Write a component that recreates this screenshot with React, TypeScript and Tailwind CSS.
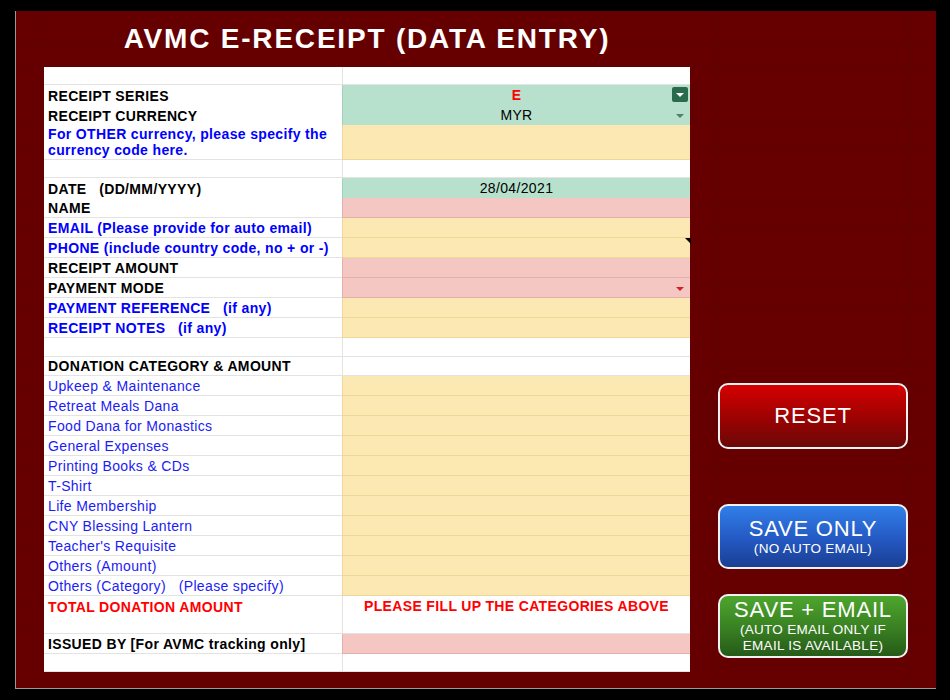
import React from 'react';

type Tone = 'black' | 'blue' | 'cat' | 'red';
type Fill = 'white' | 'green' | 'yellow' | 'pink';
type Marker = 'series' | 'grey' | 'red' | 'note';

type Row = {
  label?: React.ReactNode;
  tone?: Tone;
  fill?: Fill;
  h: string;
  value?: React.ReactNode;
  marker?: Marker;
};

const toneClass: Record<Tone, string> = {
  black: 'font-bold text-black',
  blue: 'font-bold text-[#0000ff]',
  cat: 'font-normal text-[#1b1bf5]',
  red: 'font-bold text-[#ff0000]',
};

const fillClass: Record<Fill, string> = {
  white: 'bg-white border-[#e3e3e3]',
  green: 'bg-[#b7e1cd] border-[#a3d2bb]',
  yellow: 'bg-[#fce8b2] border-[#efd79a]',
  pink: 'bg-[#f4c7c3] border-[#e4b0ab]',
};

const categories = [
  'Upkeep & Maintenance',
  'Retreat Meals Dana',
  'Food Dana for Monastics',
  'General Expenses',
  'Printing Books & CDs',
  'T-Shirt',
  'Life Membership',
  'CNY Blessing Lantern',
  "Teacher's Requisite",
  'Others (Amount)',
];

const rows: Row[] = [
  { h: 'h-[18px]' },
  { label: 'RECEIPT SERIES', tone: 'black', fill: 'green', h: 'h-[20px]', value: <span className="font-bold text-[#ff0000]">E</span>, marker: 'series' },
  { label: 'RECEIPT CURRENCY', tone: 'black', fill: 'green', h: 'h-[20px]', value: 'MYR', marker: 'grey' },
  {
    label: (
      <>
        For OTHER currency, please specify the
        <br />
        currency code here.
      </>
    ),
    tone: 'blue',
    fill: 'yellow',
    h: 'h-[35px]',
  },
  { h: 'h-[18px]' },
  { label: <>DATE&nbsp;&nbsp; (DD/MM/YYYY)</>, tone: 'black', fill: 'green', h: 'h-[20px]', value: '28/04/2021' },
  { label: 'NAME', tone: 'black', fill: 'pink', h: 'h-[20px]' },
  { label: 'EMAIL (Please provide for auto email)', tone: 'blue', fill: 'yellow', h: 'h-[20px]' },
  { label: 'PHONE (include country code, no + or -)', tone: 'blue', fill: 'yellow', h: 'h-[20px]', marker: 'note' },
  { label: 'RECEIPT AMOUNT', tone: 'black', fill: 'pink', h: 'h-[20px]' },
  { label: 'PAYMENT MODE', tone: 'black', fill: 'pink', h: 'h-[20px]', marker: 'red' },
  { label: <>PAYMENT REFERENCE&nbsp;&nbsp; (if any)</>, tone: 'blue', fill: 'yellow', h: 'h-[20px]' },
  { label: <>RECEIPT NOTES&nbsp;&nbsp; (if any)</>, tone: 'blue', fill: 'yellow', h: 'h-[20px]' },
  { h: 'h-[19px]' },
  { label: 'DONATION CATEGORY & AMOUNT', tone: 'black', h: 'h-[19px]' },
  ...categories.map((c): Row => ({ label: c, tone: 'cat', fill: 'yellow', h: 'h-[20px]' })),
  { label: <>Others (Category)&nbsp;&nbsp; (Please specify)</>, tone: 'cat', fill: 'yellow', h: 'h-[20px]' },
  {
    label: 'TOTAL DONATION AMOUNT',
    tone: 'red',
    h: 'h-[20px]',
    value: <span className="font-bold text-[#ff0000]">PLEASE FILL UP THE CATEGORIES ABOVE</span>,
  },
  { h: 'h-[18px]' },
  { label: 'ISSUED BY [For AVMC tracking only]', tone: 'black', fill: 'pink', h: 'h-[20px]' },
  { h: 'h-[18px]' },
];

function MarkerIcon({ kind }: { kind: Marker }) {
  if (kind === 'series') {
    return (
      <span className="absolute right-[2px] top-[2px] flex h-[15px] w-[16px] items-center justify-center rounded-[2px] bg-[#2b6b4d]">
        <span className="h-0 w-0 border-x-[4px] border-t-[4px] border-x-transparent border-t-white" />
      </span>
    );
  }
  if (kind === 'grey') {
    return (
      <span className="absolute right-[6px] top-[9px] h-0 w-0 border-x-[4px] border-t-[4px] border-x-transparent border-t-[#4f8068]" />
    );
  }
  if (kind === 'red') {
    return (
      <span className="absolute right-[6px] top-[9px] h-0 w-0 border-x-[4px] border-t-[4px] border-x-transparent border-t-[#d42020]" />
    );
  }
  return (
    <span className="absolute -right-[1px] top-0 h-0 w-0 border-l-[6px] border-t-[6px] border-l-transparent border-t-black" />
  );
}

function SheetRow({ row }: { row: Row }) {
  const fill = row.fill ?? 'white';
  return (
    <div className={`grid grid-cols-[298px_348px] ${row.h}`}>
      <div
        className={`flex items-center whitespace-nowrap border-b border-[#e3e3e3] bg-white pl-[4px] leading-[16px] ${
          row.tone ? toneClass[row.tone] : ''
        }`}
      >
        {row.label}
      </div>
      <div
        className={`relative flex items-center justify-center whitespace-nowrap border-b border-l text-black ${fillClass[fill]}`}
      >
        {row.value}
        {row.marker && <MarkerIcon kind={row.marker} />}
      </div>
    </div>
  );
}

function ActionButton({
  title,
  sub,
  tone,
  className,
}: {
  title: string;
  sub?: string[];
  tone: string;
  className: string;
}) {
  return (
    <button
      type="button"
      className={`flex w-[190px] flex-col items-center justify-center rounded-[10px] border-2 border-[#f2f2f2] text-white ${tone} ${className}`}
    >
      <span className="text-[22px] leading-[24px] tracking-[0.8px]">{title}</span>
      {sub?.map((s) => (
        <span key={s} className="text-[13.5px] leading-[16px] tracking-[0.3px]">
          {s}
        </span>
      ))}
    </button>
  );
}

export default function App() {
  return (
    <div className="min-h-[700px] bg-black pl-[15px] pt-[11px] font-['Liberation_Sans',Arial,sans-serif]">
      <div className="flex h-[678px] w-[921px] border-b border-l border-[#9a9a9a] bg-[#660000] bg-[repeating-linear-gradient(to_bottom,transparent_0px,transparent_13px,#5d0303_13px,#5d0303_14px,transparent_14px,transparent_20px),linear-gradient(to_right,transparent_27px,#5d0303_27px,#5d0303_28px,transparent_28px,transparent_701px,#5d0303_701px,#5d0303_702px,transparent_702px,transparent_895px,#5d0303_895px,#5d0303_896px,transparent_896px)] pl-[28px]">
        <div className="flex w-[646px] flex-col">
          <h1 className="flex h-[56px] items-center justify-center text-[28px] font-bold tracking-[1.8px] text-white">
            AVMC E-RECEIPT (DATA ENTRY)
          </h1>
          <div className="bg-white text-[14px] tracking-[0.35px]">
            {rows.map((row, i) => (
              <SheetRow key={i} row={row} />
            ))}
          </div>
        </div>

        <div className="ml-[28px] flex flex-col justify-end pb-[30px]">
          <ActionButton
            title="RESET"
            tone="bg-[linear-gradient(to_bottom,#d60000,#9a0202_55%,#6c0808)]"
            className="mb-[55px] h-[66px]"
          />
          <ActionButton
            title="SAVE ONLY"
            sub={['(NO AUTO EMAIL)']}
            tone="bg-[linear-gradient(to_bottom,#317fe9,#2458c2_55%,#1a3f92)]"
            className="mb-[25px] h-[65px]"
          />
          <ActionButton
            title="SAVE + EMAIL"
            sub={['(AUTO EMAIL ONLY IF', 'EMAIL IS AVAILABLE)']}
            tone="bg-[linear-gradient(to_bottom,#4ea62e,#387f22_55%,#265a18)]"
            className="h-[64px]"
          />
        </div>
      </div>
    </div>
  );
}
